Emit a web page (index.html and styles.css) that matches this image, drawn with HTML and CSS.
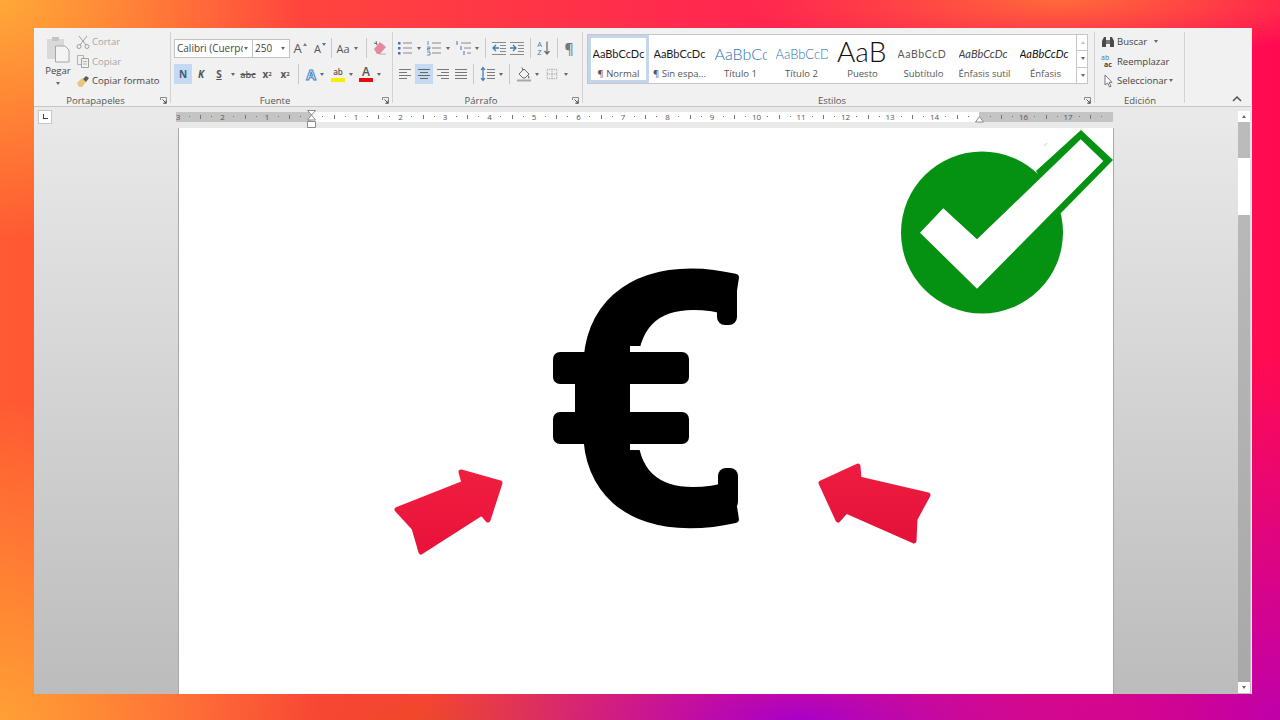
FILE: index.html
```html
<!DOCTYPE html>
<html lang="es">
<head>
  <meta charset="UTF-8">
  <title>Documento - Word</title>
  <link rel="stylesheet" href="styles.css">
</head>
<body>
  <svg class="sprites" aria-hidden="true">
    <symbol id="i-launcher" viewBox="0 0 7 7"><path d="M.5 3V.5H6.500V6.500H3.500" fill="none" stroke="#8a8a8a"/><path d="M2.500 2.500L6 6M6 3.500V6H3.500" fill="none" stroke="#555"/></symbol>
    <symbol id="i-bullets" viewBox="0 0 16 16"><path d="M6 3h9M6 8h9M6 13h9" stroke="#8a8a8a"/><path d="M1 2h2.500v2.500H1zM1 7h2.500v2.500H1zM1 12h2.500v2.500H1z" fill="#3d78b4"/></symbol>
    <symbol id="i-numbers" viewBox="0 0 16 16"><path d="M6 3h9M6 8h9M6 13h9" stroke="#8a8a8a"/><path d="M2 1v4M1 7h3v1.500H1.500V10H4M1 12h3v3H1" fill="none" stroke="#3d78b4" stroke-width=".8"/></symbol>
    <symbol id="i-multi" viewBox="0 0 16 16"><path d="M5 3h10M8 8h7M11 13h4" stroke="#8a8a8a"/><path d="M1 1v4M5 6v4M8 11v4" stroke="#3d78b4"/></symbol>
    <symbol id="i-outdent" viewBox="0 0 16 16"><path d="M1 2.500h14M9 5.500h6M9 8.500h6M9 11.500h6M1 14.500h14" stroke="#8a8a8a"/><path d="M8 8H2M5 5L2 8l3 3" fill="none" stroke="#3d78b4" stroke-width="1.300"/></symbol>
    <symbol id="i-indent" viewBox="0 0 16 16"><path d="M1 2.500h14M9 5.500h6M9 8.500h6M9 11.500h6M1 14.500h14" stroke="#8a8a8a"/><path d="M1 8h6M4 5l3 3-3 3" fill="none" stroke="#3d78b4" stroke-width="1.300"/></symbol>
    <symbol id="i-left" viewBox="0 0 14 12"><path d="M1 1.500h12M1 4.500h8M1 7.500h12M1 10.500h8" stroke="#777"/></symbol>
    <symbol id="i-center" viewBox="0 0 14 12"><path d="M1 1.500h12M3 4.500h8M1 7.500h12M3 10.500h8" stroke="#666"/></symbol>
    <symbol id="i-right" viewBox="0 0 14 12"><path d="M1 1.500h12M5 4.500h8M1 7.500h12M5 10.500h8" stroke="#777"/></symbol>
    <symbol id="i-justify" viewBox="0 0 14 12"><path d="M1 1.500h12M1 4.500h12M1 7.500h12M1 10.500h12" stroke="#777"/></symbol>
    <symbol id="i-spacing" viewBox="0 0 16 16"><path d="M7 3.500h8M7 6.500h8M7 9.500h8M7 12.500h8" stroke="#7a7a7a"/><path d="M3 2v12M1 4l2-2.500L5 4M1 12l2 2.500L5 12" fill="none" stroke="#3d78b4" stroke-width="1.200"/></symbol>
    <symbol id="i-shade" viewBox="0 0 16 16"><path d="M3 8l5-5 5 5-4 4H7z" fill="#f4f4f4" stroke="#6b6b6b"/><path d="M6 1.500l1 3" stroke="#6b6b6b"/><path d="M12 9c1.500 2 2 3 1 3.500-1 0-1-1.500-1-3.500z" fill="#6b6b6b"/><path d="M1 14.500h14" stroke="#a8a8a8" stroke-width="2"/></symbol>
    <symbol id="i-borders" viewBox="0 0 14 14"><path d="M1.500 1.500h11v11h-11zM7 1.500v11M1.500 7h11" fill="none" stroke="#8d8d8d" stroke-dasharray="1 1"/></symbol>
    <symbol id="i-sort" viewBox="0 0 8 16"><path d="M4 1.500v12M1.500 11L4 14l2.500-3" fill="none" stroke="#666" stroke-width="1.200"/></symbol>
  </svg>

  <div class="window">
    <div class="ribbon">
      <section class="group clipboard">
        <div class="group-body clip-body">
          <div class="paste">
            <svg class="paste-icon" width="24" height="28" viewBox="0 0 24 28">
              <path d="M1 4h17v20H1z" fill="#d9d9d9"/>
              <path d="M6 2h7v4H6z" fill="#c4c4c4"/>
              <path d="M9.500 11H19l4 4v12H9.500z" fill="#f4f4f4" stroke="#a6a6a6"/>
            </svg>
            <span class="paste-label">Pegar</span>
            <span class="caret"></span>
          </div>
          <div class="clip-list">
            <div class="clip-row off">
              <svg width="14" height="14" viewBox="0 0 14 14"><path d="M3 1l7 9M11 1L4 10" stroke="#a0a0a0" fill="none"/><circle cx="3" cy="11.500" r="2" fill="none" stroke="#a0a0a0"/><circle cx="11" cy="11.500" r="2" fill="none" stroke="#a0a0a0"/></svg>
              <span>Cortar</span>
            </div>
            <div class="clip-row off">
              <svg width="14" height="14" viewBox="0 0 14 14"><path d="M1.500 1.500h6v9h-6z" fill="none" stroke="#b0b0b0"/><path d="M5.500 4.500h7v9h-7z" fill="#f1f1f1" stroke="#a0a0a0"/><path d="M7 7.500h4M7 10h4" stroke="#b0b0b0"/></svg>
              <span>Copiar</span>
            </div>
            <div class="clip-row">
              <svg width="14" height="14" viewBox="0 0 14 14"><path d="M1 9l5-5 4 4-4 5H3z" fill="#e8c878"/><path d="M7 5l3-3 3 2-3 4z" fill="#5a5a5a"/></svg>
              <span>Copiar formato</span>
            </div>
          </div>
        </div>
        <div class="group-foot"><span class="group-label">Portapapeles</span><svg class="launcher"><use href="#i-launcher"/></svg></div>
      </section>

      <section class="group font">
        <div class="group-body tools">
          <div class="tool-row">
            <div class="combo font-name"><span>Calibri (Cuerpo</span><b class="caret"></b></div>
            <div class="combo font-size"><span>250</span><b class="caret"></b></div>
            <div class="tool t20 grow-a">A<i class="up"></i></div>
            <div class="tool t20 shrink-a">A<i class="down"></i></div>
            <span class="sep s-aa"></span>
            <div class="tool t30 change-case">Aa<b class="caret"></b></div>
            <span class="sep"></span>
            <div class="tool t18 eraser">
              <svg width="16" height="16" viewBox="0 0 16 16"><path d="M2 9l6-7 6 5-6 7H5z" fill="#e58a9c"/><path d="M4 1l1 4M2 3l3 1" stroke="#6b6b6b"/><path d="M7 14h7" stroke="#b0b0b0"/></svg>
            </div>
          </div>
          <div class="tool-row">
            <div class="tool t18 btn-on letter bold">N</div>
            <div class="tool t18 letter italic">K</div>
            <div class="tool t18 letter under">S</div>
            <div class="tool t10"><b class="caret"></b></div>
            <div class="tool t20 strike">abc</div>
            <div class="tool t18 script">x<sub>2</sub></div>
            <div class="tool t18 script">x<sup>2</sup></div>
            <span class="sep s-row2"></span>
            <div class="tool t26 effects"><span class="outline-a">A</span><b class="caret"></b></div>
            <div class="tool t28 hilite"><span class="bar-letter yellow">ab</span><b class="caret"></b></div>
            <div class="tool t28 color"><span class="bar-letter red">A</span><b class="caret"></b></div>
          </div>
        </div>
        <div class="group-foot"><span class="group-label">Fuente</span><svg class="launcher"><use href="#i-launcher"/></svg></div>
      </section>

      <section class="group para">
        <div class="group-body tools">
          <div class="tool-row">
            <div class="tool t18"><svg class="ic"><use href="#i-bullets"/></svg></div>
            <div class="tool t10"><b class="caret"></b></div>
            <div class="tool t18 ml1"><svg class="ic"><use href="#i-numbers"/></svg></div>
            <div class="tool t10"><b class="caret"></b></div>
            <div class="tool t18 ml2"><svg class="ic"><use href="#i-multi"/></svg></div>
            <div class="tool t8"><b class="caret"></b></div>
            <span class="sep"></span>
            <div class="tool t18"><svg class="ic"><use href="#i-outdent"/></svg></div>
            <div class="tool t18"><svg class="ic"><use href="#i-indent"/></svg></div>
            <span class="sep"></span>
            <div class="tool t18 sort"><span class="az"><i>A</i><i>Z</i></span><svg class="ic-s"><use href="#i-sort"/></svg></div>
            <span class="sep"></span>
            <div class="tool t18 pilcrow">¶</div>
          </div>
          <div class="tool-row">
            <div class="tool t18"><svg class="ic-a"><use href="#i-left"/></svg></div>
            <div class="tool t18 btn-on ml1"><svg class="ic-a"><use href="#i-center"/></svg></div>
            <div class="tool t18 ml1"><svg class="ic-a"><use href="#i-right"/></svg></div>
            <div class="tool t18"><svg class="ic-a"><use href="#i-justify"/></svg></div>
            <span class="sep s-just"></span>
            <div class="tool t18 ml1"><svg class="ic"><use href="#i-spacing"/></svg></div>
            <div class="tool t8"><b class="caret"></b></div>
            <span class="sep"></span>
            <div class="tool t18 ml1"><svg class="ic"><use href="#i-shade"/></svg></div>
            <div class="tool t8"><b class="caret"></b></div>
            <div class="tool t18 ml2"><svg class="ic-a"><use href="#i-borders"/></svg></div>
            <div class="tool t10"><b class="caret"></b></div>
          </div>
        </div>
        <div class="group-foot"><span class="group-label">Párrafo</span><svg class="launcher"><use href="#i-launcher"/></svg></div>
      </section>

      <section class="group styles">
        <div class="group-body">
          <div class="gallery">
            <div class="style-item selected"><div class="preview">AaBbCcDc</div><div class="style-name">¶ Normal</div></div>
            <div class="style-item"><div class="preview">AaBbCcDc</div><div class="style-name">¶ Sin espa...</div></div>
            <div class="style-item"><div class="preview h1">AaBbCc</div><div class="style-name">Título 1</div></div>
            <div class="style-item"><div class="preview h2">AaBbCcD</div><div class="style-name">Título 2</div></div>
            <div class="style-item"><div class="preview title">AaBl</div><div class="style-name">Puesto</div></div>
            <div class="style-item"><div class="preview subtitle">AaBbCcD</div><div class="style-name">Subtítulo</div></div>
            <div class="style-item"><div class="preview subtle">AaBbCcDc</div><div class="style-name">Énfasis sutil</div></div>
            <div class="style-item"><div class="preview emph">AaBbCcDc</div><div class="style-name">Énfasis</div></div>
            <div class="spinner">
              <span class="spin-off"><b class="caret flip"></b></span>
              <span><b class="caret"></b></span>
              <span class="more"><b class="caret"></b></span>
            </div>
          </div>
        </div>
        <div class="group-foot"><span class="group-label">Estilos</span><svg class="launcher"><use href="#i-launcher"/></svg></div>
      </section>

      <section class="group editing">
        <div class="group-body edit-list">
          <div class="edit-row">
            <svg width="14" height="14" viewBox="0 0 14 14"><path d="M1 12V6l2-4h2v10zM9 12V2h2l2 4v6z" fill="#4a4a4a"/><path d="M5 5h4v4H5z" fill="#7a7a7a"/></svg>
            <span>Buscar</span><b class="caret find-caret"></b>
          </div>
          <div class="edit-row">
            <span class="ab-ac"><i>ab</i><i>ac</i></span>
            <span>Reemplazar</span>
          </div>
          <div class="edit-row">
            <svg class="pointer" width="14" height="14" viewBox="0 0 14 14"><path d="M4 1v10l2.500-2 2 4 1.500-.7-2-4H11z" fill="#fff" stroke="#777"/></svg>
            <span>Seleccionar</span><b class="caret"></b>
          </div>
        </div>
        <div class="group-foot"><span class="group-label">Edición</span></div>
      </section>

      <svg class="collapse" width="10" height="6" viewBox="0 0 10 6"><path d="M1 5l4-4 4 4" fill="none" stroke="#555" stroke-width="1.500"/></svg>
    </div>

    <div class="ruler-row">
      <div class="tab-stop"><span></span></div>
      <div class="ruler">
        <div class="scale">
          <span class="cm">3</span><span class="cm">2</span><span class="cm">1</span><span class="cm"></span>
          <span class="cm">1</span><span class="cm">2</span><span class="cm">3</span><span class="cm">4</span>
          <span class="cm">5</span><span class="cm">6</span><span class="cm">7</span><span class="cm">8</span>
          <span class="cm">9</span><span class="cm">10</span><span class="cm">11</span><span class="cm">12</span>
          <span class="cm">13</span><span class="cm">14</span><span class="cm"></span><span class="cm">16</span>
          <span class="cm">17</span><span class="cm"></span>
        </div>
        <svg class="indent-left" width="9" height="19" viewBox="0 0 9 19"><path d="M.5.500h8L4.500 5zM4.500 5l4 5h-8zM.5 11.500h8v6h-8z" fill="#fff" stroke="#8a8a8a"/></svg>
        <svg class="indent-right" width="9" height="7" viewBox="0 0 9 7"><path d="M4.500.500l4 5.500h-8z" fill="#fff" stroke="#8a8a8a"/></svg>
      </div>
    </div>

    <div class="workspace">
      <div class="page">
        <svg class="shape euro" width="210" height="270" viewBox="0 0 210 270">
          <text class="euro-glyph" transform="translate(105 261) scale(1.08 1)">€</text>
          <rect x="90" y="86" width="90" height="104" fill="#fff"/>
          <rect x="0" y="86" width="36" height="104" fill="#fff"/>
          <rect x="35" y="92" width="54" height="92"/>
          <rect x="13" y="92" width="136" height="32" rx="7"/>
          <rect x="13" y="152" width="136" height="32" rx="7"/>
          <rect x="177" y="24" width="20" height="41" rx="8"/>
          <rect x="178" y="208" width="20" height="42" rx="8"/>
        </svg>

        <svg class="shape check" width="216" height="188" viewBox="0 0 216 188">
          <circle cx="83" cy="104.500" r="81" fill="#059212"/>
          <path d="M182 2l32 30-53 54-24-43z" fill="#059212"/>
          <path d="M21 104.700l23.300-24.400L78 111.300 181.700 11.300 204.300 33 78 160.700z" fill="#fff"/>
          <path d="M145 18l3-3" stroke="#e2e2e2" stroke-width="1.500"/>
        </svg>

        <svg class="shape arrow-left" width="116" height="96" viewBox="0 0 116 96">
          <defs>
            <linearGradient id="red-l" x1="0" y1="0" x2="0" y2="1"><stop offset="0" stop-color="#f01e40"/><stop offset="1" stop-color="#e8123a"/></linearGradient>
          </defs>
          <path d="M9 46.500L76 20 73 9 112 20 100 57 94 50 33 89 26 65z" fill="url(#red-l)" stroke="url(#red-l)" stroke-width="5" stroke-linejoin="round"/>
        </svg>

        <svg class="shape arrow-right" width="120" height="90" viewBox="0 0 120 90">
          <defs>
            <linearGradient id="red-r" x1="0" y1="0" x2="0" y2="1"><stop offset="0" stop-color="#ee1c40"/><stop offset="1" stop-color="#e4123a"/></linearGradient>
          </defs>
          <path d="M5 22L42 5 43 18 112 34 99 58 98 80 30 50 22 59z" fill="url(#red-r)" stroke="url(#red-r)" stroke-width="5" stroke-linejoin="round"/>
        </svg>
      </div>
      <div class="scrollbar">
        <span class="scroll-btn"><b class="caret flip"></b></span>
        <span class="thumb"></span>
        <span class="scroll-btn down"><b class="caret"></b></span>
      </div>
    </div>
  </div>
</body>
</html>
```

FILE: styles.css
```css
* {
  box-sizing: border-box;
}
html, body {
  height: 100%;
}
body {
  margin: 0;
  height: 720px;
  overflow: hidden;
  padding: 28px 28px 26px 34px;
  font-family: "Open Sans", "Noto Sans", sans-serif;
  font-size: 9.500px;
  color: #444;
  background:
    radial-gradient(300px 240px at 0 0, #ffa838 0%, rgba(255, 150, 50, 0) 100%),
    radial-gradient(320px 320px at 0 720px, #ffa035 0%, rgba(255, 130, 50, 0) 100%),
    radial-gradient(420px 360px at 1280px 720px, #c000aa 0%, rgba(200, 0, 160, 0) 100%),
    radial-gradient(380px 110px at 800px 720px, #a800c8 0%, rgba(172, 0, 196, 0) 100%),
    radial-gradient(300px 60px at 450px 720px, #ee4a28 0%, rgba(238, 74, 40, 0) 100%),
    radial-gradient(320px 60px at 1060px 0, #ff6a3a 0%, rgba(255, 106, 58, 0) 100%),
    linear-gradient(90deg, #ff5a32 0%, #ff3a44 35%, #ff2450 60%, #ff0a52 100%);
}
.sprites {
  display: none;
}
.window {
  width: 1218px;
  height: 666px;
  display: flex;
  flex-direction: column;
  background: #f1f1f1;
  border-right: 1px solid #f4e6ee;
}

/* ribbon */
.ribbon {
  height: 79px;
  flex: none;
  display: flex;
  background: #f1f1f1;
  border-bottom: 1px solid #c6c6c6;
  border-radius: 2px 2px 0 0;
}
.group {
  display: flex;
  flex-direction: column;
  padding-top: 3px;
  flex: none;
  position: relative;
}
.group::after {
  content: "";
  position: absolute;
  right: 0;
  top: 4px;
  bottom: 3px;
  width: 1px;
  background: #d2d2d2;
}
.clipboard { width: 137px; }
.font { width: 222px; }
.para { width: 190px; }
.styles { width: 512px; }
.editing { width: 90px; }
.group-body {
  flex: 1;
}
.group-foot {
  height: 14px;
  display: flex;
  align-items: center;
  flex: none;
  padding-top: 2px;
}
.group-label {
  flex: 1;
  text-align: center;
  color: #555;
  font-size: 9.500px;
}
.launcher {
  width: 7px;
  height: 7px;
  margin: 0 4px 0 3px;
}
.caret {
  display: inline-block;
  flex: none;
  width: 0;
  height: 0;
  border-left: 2.500px solid transparent;
  border-right: 2.500px solid transparent;
  border-top: 3px solid #666;
}
.caret.flip {
  border-top: 0;
  border-bottom: 3px solid #666;
}

/* portapapeles */
.clip-body {
  display: flex;
  padding-left: 6px;
}
.paste {
  width: 36px;
  display: flex;
  flex-direction: column;
  align-items: center;
}
.paste-icon {
  margin-top: 4px;
}
.paste-label {
  margin-top: 1px;
  color: #444;
  line-height: 14px;
}
.paste .caret {
  margin-top: 4px;
}
.clip-list {
  display: flex;
  flex-direction: column;
  padding-top: 1px;
}
.clip-row {
  height: 19.500px;
  display: flex;
  align-items: center;
  gap: 2px;
  white-space: nowrap;
}
.clip-row.off {
  color: #a6a6a6;
}

/* fuente y parrafo */
.tools {
  padding: 7px 0 0 3px;
  display: flex;
  flex-direction: column;
  gap: 6px;
}
.tool-row {
  height: 20px;
  display: flex;
  align-items: center;
}
.tool {
  height: 20px;
  flex: none;
  display: flex;
  align-items: center;
  justify-content: center;
  color: #555;
  position: relative;
}
.t8 { width: 8px; }
.t10 { width: 10px; }
.t18 { width: 18px; }
.t20 { width: 20px; }
.t26 { width: 26px; }
.t28 { width: 28px; }
.t30 { width: 30px; }
.ml1 { margin-left: 1px; }
.ml2 { margin-left: 2px; }
.btn-on {
  background: #c5daf2;
}
.sep {
  width: 1px;
  height: 20px;
  flex: none;
  margin: 0 4px;
  background: #c8c8c8;
}
.s-aa { margin: 0 0 0 1px; }
.s-row2 { margin: 0 3px 0 4px; }
.s-just { margin: 0 4px 0 3px; }
.ic {
  width: 16px;
  height: 16px;
}
.ic-a {
  width: 14px;
  height: 12px;
}
.ic-s {
  width: 8px;
  height: 16px;
}
.combo {
  height: 19px;
  flex: none;
  display: flex;
  align-items: center;
  background: #fff;
  border: 1px solid #c2c2c2;
  padding: 0 4px 0 2px;
  font-size: 10px;
  color: #444;
  overflow: hidden;
  justify-content: space-between;
}
.combo span {
  overflow: hidden;
  white-space: nowrap;
}
.font-name { width: 79px; }
.font-name span { width: 66px; }
.font-size {
  width: 37px;
  border-left: 0;
}
.grow-a { font-size: 13px; }
.shrink-a { font-size: 11px; }
.tool .up, .tool .down {
  width: 0;
  height: 0;
  margin: -8px 0 0 1px;
  border-left: 2px solid transparent;
  border-right: 2px solid transparent;
}
.tool .up { border-bottom: 3px solid #777; }
.tool .down { border-top: 3px solid #3d78b4; }
.change-case {
  gap: 4px;
  font-size: 11px;
}
.letter {
  font-size: 10px;
  font-weight: 700;
}
.bold { color: #3d5a80; }
.italic { font-style: italic; }
.under { text-decoration: underline; }
.strike {
  font-size: 9px;
  font-weight: 600;
  text-decoration: line-through;
}
.script {
  font-size: 10px;
  font-weight: 700;
}
.script sub, .script sup {
  font-size: 6px;
  line-height: 0;
}
.effects, .hilite, .color {
  gap: 4px;
}
.outline-a {
  font-size: 14px;
  font-weight: 700;
  color: #e8f1fa;
  -webkit-text-stroke: 1px #3f86c9;
}
.bar-letter {
  width: 14px;
  height: 16px;
  display: block;
  text-align: center;
  font-size: 10px;
  line-height: 12px;
  font-weight: 600;
}
.yellow { border-bottom: 4px solid #f4f000; font-size: 8px; }
.red { border-bottom: 4px solid #e01010; font-size: 12px; }
.sort {
  gap: 1px;
}
.az {
  display: flex;
  flex-direction: column;
  font-size: 7.500px;
  line-height: 8px;
  color: #3d78b4;
}
.az i {
  font-style: normal;
}
.pilcrow {
  font-size: 14px;
  font-weight: 600;
  color: #777;
  left: -2px;
}

/* estilos */
.styles {
  padding-left: 4px;
}
.styles .group-foot {
  margin-left: -4px;
}
.gallery {
  margin-top: 3px;
  width: 501px;
  height: 50px;
  display: flex;
  background: #fff;
  border: 1px solid #c6c6c6;
}
.style-item {
  width: 61px;
  flex: none;
  display: flex;
  flex-direction: column;
  align-items: center;
  overflow: hidden;
  padding: 0 4px;
}
.style-item.selected {
  border: 3px solid #c5d6ec;
}
.preview {
  height: 31px;
  width: 52px;
  flex: none;
  overflow: hidden;
  white-space: nowrap;
  font-family: "Lato", "Open Sans", sans-serif;
  font-size: 11px;
  line-height: 38px;
  color: #1a1a1a;
}
.selected .preview {
  height: 28px;
  line-height: 32px;
}
.preview.h1 {
  color: #2e74b5;
  font-size: 16px;
  font-weight: 300;
}
.preview.h2 {
  color: #2e74b5;
  font-size: 13px;
  font-weight: 300;
}
.preview.title {
  font-size: 28px;
  font-weight: 300;
  line-height: 32px;
  color: #111;
  width: 51px;
}
.preview.subtitle {
  font-size: 10.500px;
  letter-spacing: .6px;
  color: #5a5a5a;
}
.preview.subtle {
  font-style: italic;
  color: #404040;
}
.preview.emph {
  font-style: italic;
  color: #111;
}
.style-name {
  white-space: nowrap;
  color: #555;
  line-height: 16px;
}
.spinner {
  width: 12px;
  flex: none;
  display: flex;
  flex-direction: column;
  border-left: 1px solid #c6c6c6;
}
.spinner span {
  flex: 1;
  display: flex;
  align-items: center;
  justify-content: center;
  border-bottom: 1px solid #c6c6c6;
}
.spinner span:last-child {
  border-bottom: 0;
}
.spin-off .caret {
  border-bottom-color: #c4c4c4;
}

/* edicion */
.edit-list {
  padding: 1px 0 0 6px;
  display: flex;
  flex-direction: column;
}
.edit-row {
  height: 19.500px;
  display: flex;
  align-items: center;
  gap: 2px;
  white-space: nowrap;
  color: #444;
}
.find-caret {
  margin-left: 5px;
}
.ab-ac {
  width: 14px;
  display: flex;
  flex-direction: column;
  font-size: 7px;
  line-height: 7px;
}
.ab-ac i {
  font-style: normal;
  color: #3d78b4;
}
.ab-ac i + i {
  color: #444;
  font-weight: 700;
  margin-left: 3px;
}
.collapse {
  margin: auto 9px 4px auto;
}

/* regla */
.ruler-row {
  height: 21px;
  flex: none;
  display: flex;
  align-items: center;
  padding-bottom: 2px;
  background: #e9e9e9;
}
.tab-stop {
  width: 14px;
  height: 14px;
  margin-left: 4px;
  background: #fff;
  border: 1px solid #c6c6c6;
  display: flex;
  align-items: center;
  justify-content: center;
}
.tab-stop span {
  width: 5px;
  height: 5px;
  border-left: 1px solid #444;
  border-bottom: 1px solid #444;
}
.ruler {
  width: 937px;
  height: 10px;
  margin-left: 124px;
  position: relative;
  background: linear-gradient(90deg, #c4c4c4 135px, #fff 135px, #fff 803px, #c4c4c4 803px);
}
.scale {
  height: 10px;
  margin-left: -3px;
  padding-left: 3px;
  overflow: hidden;
  display: flex;
}
.cm {
  width: 44.500px;
  flex: none;
  font-size: 8px;
  line-height: 10px;
  text-align: center;
  color: #555;
  position: relative;
  left: -20.250px;
  background:
    linear-gradient(#777, #777) 11px center / 1px 1px no-repeat,
    linear-gradient(#777, #777) 33px center / 1px 1px no-repeat,
    linear-gradient(#777, #777) 0 center / 1px 4px no-repeat;
}
.indent-left {
  position: absolute;
  left: 131px;
  top: -2px;
}
.indent-right {
  position: absolute;
  left: 799px;
  top: 4px;
}

/* documento */
.workspace {
  flex: 1;
  display: flex;
  background: linear-gradient(#e8e8e8, #bcbcbc);
}
.page {
  width: 936px;
  margin-left: 144px;
  background: #fff;
  border-left: 1px solid #a8a8a8;
  border-right: 1px solid #a8a8a8;
  position: relative;
}
.shape {
  position: absolute;
  overflow: visible;
}
.euro {
  left: 361px;
  top: 132px;
}
.euro-glyph {
  font-family: Roboto, "Open Sans", sans-serif;
  font-weight: 500;
  font-size: 345px;
  text-anchor: middle;
  fill: #000;
  stroke: #000;
  stroke-width: 8px;
  stroke-linejoin: round;
}
.check {
  left: 720px;
  top: 0;
}
.arrow-left {
  left: 209px;
  top: 335px;
}
.arrow-right {
  left: 637px;
  top: 333px;
}
.scrollbar {
  width: 12px;
  margin-left: auto;
  margin-right: 1px;
  margin-top: -17px;
  margin-bottom: 1px;
  display: flex;
  flex-direction: column;
  background: linear-gradient(#bcbcbc, #a8a8a8);
  position: relative;
}
.scroll-btn {
  height: 11px;
  flex: none;
  background: #fff;
  display: flex;
  align-items: center;
  justify-content: center;
}
.scroll-btn.down {
  margin-top: auto;
}
.thumb {
  height: 57px;
  flex: none;
  margin-top: 36px;
  background: #fff;
}
```
